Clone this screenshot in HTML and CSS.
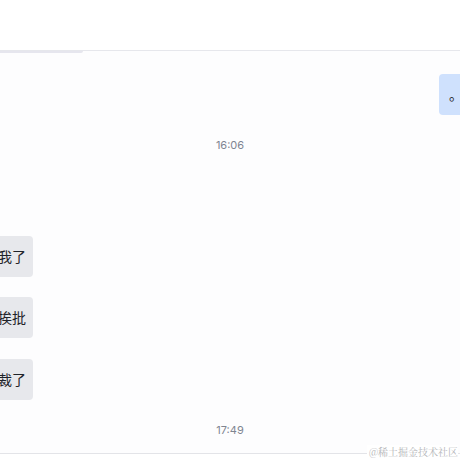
FILE: index.html
```html
<!DOCTYPE html>
<html lang="zh">
<head>
<meta charset="utf-8">
<link rel="stylesheet" href="styles.css">
</head>
<body>
<div class="app">
  <header class="header"></header>
  <main class="chat">
    <div class="indicator"></div>
    <div class="row row-right"><div class="bubble bubble-me">。好的</div></div>
    <div class="time time-first">16:06</div>
    <div class="row row-left row-first"><div class="bubble bubble-other">他们不找我了</div></div>
    <div class="row row-left"><div class="bubble bubble-other">今天又挨批</div></div>
    <div class="row row-left row-third"><div class="bubble bubble-other">我被裁了</div></div>
    <div class="time time-second">17:49</div>
  </main>
  <footer class="footer"></footer>
  <div class="watermark">@稀土掘金技术社区</div>
</div>
</body>
</html>
```

FILE: styles.css
```css
html, body {
  margin: 0;
  padding: 0;
  background: #fdfdfe;
}
.app {
  position: relative;
  width: 460px;
  height: 460px;
  overflow: hidden;
  font-family: "Inter", "Liberation Sans", "Noto Sans CJK SC", sans-serif;
  background: #fdfdfe;
}
.header {
  height: 50px;
  background: #ffffff;
  border-bottom: 1px solid #e6e7ec;
}
.chat {
  display: flex;
  flex-direction: column;
}
.indicator {
  width: 83px;
  height: 2px;
  background: #e6e6ee;
  border-radius: 0 0 3px 0;
}
.row {
  display: flex;
  overflow: hidden;
}
.row-right {
  margin-top: 21px;
  padding-left: 439px;
}
.row-left {
  width: 33px;
  justify-content: flex-end;
  margin-top: 20px;
}
.row-first {
  margin-top: 83px;
}
.row-third {
  margin-top: 21px;
}
.bubble {
  flex-shrink: 0;
  padding: 10px 7px 10px 10px;
  font-family: "Noto Sans CJK SC", sans-serif;
  font-size: 14px;
  line-height: 21px;
  color: #1f2329;
  border-radius: 4px;
  white-space: nowrap;
}
.bubble-me {
  background: #cfe1fd;
  padding-right: 10px;
}
.bubble-other {
  background: #e7e8ec;
}
.time {
  text-align: center;
  font-size: 11px;
  line-height: 16px;
  color: #7f8591;
  padding-left: 0;
}
.time-first {
  margin-top: 22px;
}
.time-second {
  margin-top: 22px;
}
.footer {
  margin-top: 15px;
  border-top: 1px solid #e3e4e8;
  height: 20px;
  background: #ffffff;
}
.watermark {
  position: absolute;
  right: 2px;
  top: 445px;
  padding-left: 2px;
  background: #ffffff;
  font-family: "Noto Serif CJK SC", "Liberation Serif", "Noto Sans CJK SC", serif;
  font-size: 10px;
  line-height: 14px;
  color: #b4b5b8;
}
```
